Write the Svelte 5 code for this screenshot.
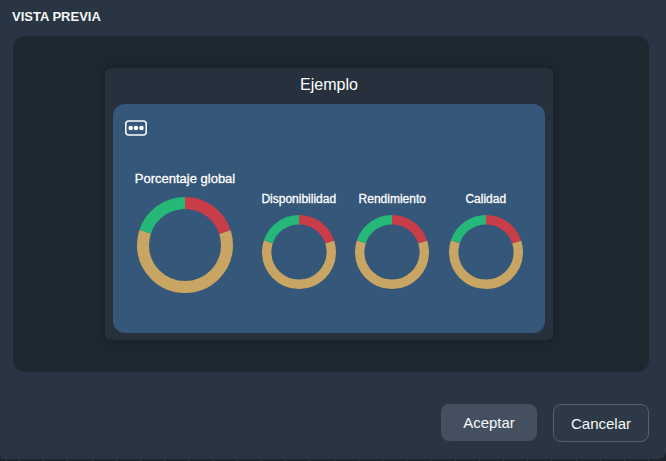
<script>
  const gauges = [
    { label: 'Disponibilidad' },
    { label: 'Rendimiento' },
    { label: 'Calidad' }
  ];

  // red 0-20%, tan 20-80%, green 80-100%
  const arcs = [
    { color: '#c93d48', from: 0, to: 0.2 },
    { color: '#c9a563', from: 0.2, to: 0.8 },
    { color: '#25b878', from: 0.8, to: 1 }
  ];

  const radius = (size, width) => (size - width) / 2;
  const len = (size, width) => 2 * Math.PI * radius(size, width);
</script>

{#snippet donut(size, width)}
  <svg class="donut" width={size} height={size} viewBox="0 0 {size} {size}">
    {#each arcs as a}
      <circle
        cx={size / 2}
        cy={size / 2}
        r={radius(size, width)}
        fill="none"
        stroke={a.color}
        stroke-width={width}
        stroke-dasharray="{(a.to - a.from) * len(size, width)} {len(size, width)}"
        stroke-dashoffset={-a.from * len(size, width)}
        transform="rotate(-90 {size / 2} {size / 2})"
      />
    {/each}
  </svg>
{/snippet}

<div class="dialog">
  <h2>VISTA PREVIA</h2>

  <section class="preview">
    <div class="card">
      <h3>Ejemplo</h3>
      <div class="panel">
        <svg class="more" width="22" height="16" viewBox="0 0 22 16">
          <rect x="0.8" y="1" width="20.4" height="14" rx="3" fill="none" stroke="#fff" stroke-width="1.5" />
          <circle cx="5.7" cy="8" r="2.3" fill="#fff" />
          <circle cx="11" cy="8" r="2.3" fill="#fff" />
          <circle cx="16.5" cy="8" r="2.3" fill="#fff" />
        </svg>
        <div class="charts">
          <div class="gauge main">
            <span>Porcentaje global</span>
            {@render donut(96, 12)}
          </div>
          {#each gauges as g}
            <div class="gauge">
              <span>{g.label}</span>
              {@render donut(74, 9.4)}
            </div>
          {/each}
        </div>
      </div>
    </div>
  </section>

  <footer>
    <button class="accept">Aceptar</button>
    <button class="cancel">Cancelar</button>
  </footer>
</div>

<style>
  :global(body) {
    margin: 0;
    background: repeating-linear-gradient(90deg, #2e3843 0 1px, #1c252d 1px 24.2px) 19px 0;
  }

  .dialog {
    box-sizing: border-box;
    width: 666px;
    height: 459px;
    padding: 10px 17px 0 13px;
    background: #293543;
    border-radius: 0 0 8px 3px;
    font-family: "Liberation Sans", Arial, sans-serif;
    color: #fff;
  }

  h2 {
    margin: 0 0 0 -1px;
    font-size: 13px;
    line-height: 14px;
    font-weight: 700;
    color: #f6f7f9;
  }

  .preview {
    display: flex;
    justify-content: center;
    align-items: center;
    box-sizing: border-box;
    height: 336px;
    margin-top: 12px;
    padding-right: 4px;
    background: #1e2831;
    border-radius: 12px;
  }

  .card {
    box-sizing: border-box;
    width: 448px;
    height: 272px;
    padding: 0 8px 8px;
    background: #27313d;
    border-radius: 6px;
    box-shadow: 0 0 12px rgba(0, 0, 0, 0.25);
  }

  h3 {
    margin: 0;
    height: 36px;
    font-size: 16px;
    line-height: 33px;
    font-weight: 400;
    text-align: center;
    color: #fff;
  }

  .panel {
    position: relative;
    height: 229px;
    background: #355779;
    border-radius: 12px;
  }

  .more {
    display: block;
    position: absolute;
    left: 12px;
    top: 16px;
  }

  .charts {
    display: flex;
    align-items: flex-end;
    box-sizing: border-box;
    height: 100%;
    padding: 0 0 40px 22px;
  }

  .gauge {
    display: flex;
    flex-direction: column;
    align-items: center;
    width: 93.5px;
    margin-bottom: 4px;
    font-size: 12px;
  }

  .gauge span {
    white-space: nowrap;
    line-height: 14px;
    margin-bottom: 9px;
    color: #fff;
    -webkit-text-stroke: 0.3px #fff;
  }

  .gauge.main {
    width: 100px;
    margin-right: 17px;
    margin-bottom: 0;
    font-size: 13px;
  }

  .gauge.main span {
    margin-bottom: 11px;
  }

  .donut {
    display: block;
  }

  footer {
    display: flex;
    justify-content: flex-end;
    gap: 16px;
    margin-top: 32px;
  }

  button {
    box-sizing: border-box;
    width: 96px;
    height: 37px;
    border-radius: 8px;
    font: 400 15px "Liberation Sans", Arial, sans-serif;
    color: #f8f9fa;
    cursor: pointer;
  }

  .accept {
    background: #44505f;
    border: none;
  }

  .cancel {
    background: #2d3946;
    border: 1px solid #56616e;
    height: 38px;
  }
</style>
